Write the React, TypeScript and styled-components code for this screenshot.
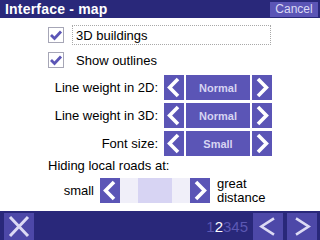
import styled, { createGlobalStyle } from 'styled-components';

const GlobalStyle = createGlobalStyle`
  html, body {
    margin: 0;
    padding: 0;
    background: #ffffff;
  }
  body {
    font-family: "Liberation Sans", Arial, sans-serif;
  }
`;

const Screen = styled.div`
  width: 320px;
  height: 240px;
  display: flex;
  flex-direction: column;
  overflow: hidden;
  background: #ffffff;
`;

const TitleBar = styled.div`
  height: 18px;
  background: #29287a;
  display: flex;
  align-items: center;
  justify-content: space-between;
  padding: 0 2px 0 5px;
`;

const Title = styled.div`
  color: #ffffff;
  font-size: 14px;
  font-weight: bold;
  letter-spacing: 0.2px;
`;

const CancelButton = styled.div`
  width: 48px;
  height: 15px;
  background: #5b55b6;
  color: #dcdaf4;
  font-size: 12px;
  display: flex;
  align-items: center;
  justify-content: center;
`;

const Content = styled.div`
  flex: 1;
  display: flex;
  flex-direction: column;
  padding-top: 7px;
`;

const CheckRow = styled.div`
  display: flex;
  align-items: center;
  height: 20px;
  padding-left: 48px;
  margin-bottom: 5px;
`;

const Box = styled.div`
  width: 14px;
  height: 14px;
  border: 1px solid #a6a6b6;
  background: #ffffff;
  display: flex;
  align-items: center;
  justify-content: center;
  margin-right: 8px;
`;

const CheckLabel = styled.div<{ $focused?: boolean }>`
  height: 18px;
  width: ${(p) => (p.$focused ? '194px' : 'auto')};
  border: 1px dotted ${(p) => (p.$focused ? '#a8a8a8' : 'transparent')};
  padding-left: 3px;
  display: flex;
  align-items: center;
  font-size: 13px;
  color: #000000;
`;

const SelectorRow = styled.div`
  display: flex;
  align-items: center;
  height: 25px;
  margin-bottom: 3px;
`;

const RowLabel = styled.div`
  width: 158px;
  text-align: right;
  font-size: 13px;
  color: #000000;
  margin-right: 6px;
`;

const ArrowButton = styled.div`
  width: 20px;
  height: 25px;
  background: #5b55b6;
  display: flex;
  align-items: center;
  justify-content: center;
`;

const ValueBox = styled.div`
  width: 64px;
  height: 25px;
  margin: 0 2px;
  background: #5b55b6;
  color: #d6d4f2;
  font-size: 11px;
  font-weight: bold;
  display: flex;
  align-items: center;
  justify-content: center;
`;

const PlainText = styled.div`
  font-size: 13px;
  color: #000000;
  padding-left: 48px;
  height: 15px;
  line-height: 15px;
  margin-bottom: 4px;
  margin-top: -1px;
`;

const SliderRow = styled.div`
  display: flex;
  align-items: center;
  height: 27px;
`;

const SideLabel = styled.div`
  width: 94px;
  text-align: right;
  font-size: 13px;
  color: #000000;
  margin-right: 6px;
`;

const Track = styled.div`
  display: flex;
  height: 25px;
`;

const Segment = styled.div<{ $w: number; $active?: boolean }>`
  width: ${(p) => p.$w}px;
  background: ${(p) => (p.$active ? '#d7d4f3' : '#f0eff9')};
`;

const FarLabel = styled.div`
  font-size: 13px;
  line-height: 14px;
  color: #000000;
  margin-left: 7px;
`;

const Footer = styled.div`
  height: 29px;
  background: #29287a;
  display: flex;
  align-items: flex-end;
  padding: 0 3px 0 4px;
`;

const FooterButton = styled.div`
  width: 30px;
  height: 27px;
  background: #4d48a8;
  display: flex;
  align-items: center;
  justify-content: center;
`;

const Spacer = styled.div`
  flex: 1;
`;

const Pages = styled.div`
  font-size: 15px;
  height: 27px;
  display: flex;
  align-items: center;
  margin-right: 5px;
  color: #5c58b4;
`;

const Page = styled.span<{ $current?: boolean }>`
  color: ${(p) => (p.$current ? '#ffffff' : '#5c58b4')};
`;

const FooterNav = styled.div`
  display: flex;
  gap: 4px;
`;

type ChevronProps = { dir: 'l' | 'r'; w?: number; h?: number; stroke?: number; color?: string; spread?: number };

const Chevron = ({ dir, w = 20, h = 25, stroke = 3.6, color = '#ffffff', spread = 0.34 }: ChevronProps) => {
  const top = h * (0.5 - spread);
  const bot = h * (0.5 + spread);
  const pts =
    dir === 'l'
      ? `${w * 0.7},${top} ${w * 0.28},${h * 0.5} ${w * 0.7},${bot}`
      : `${w * 0.3},${top} ${w * 0.72},${h * 0.5} ${w * 0.3},${bot}`;
  return (
    <svg width={w} height={h} viewBox={`0 0 ${w} ${h}`}>
      <polyline points={pts} fill="none" stroke={color} strokeWidth={stroke} strokeLinejoin="miter" />
    </svg>
  );
};

const Check = () => (
  <svg width="14" height="14" viewBox="0 0 14 14">
    <polyline points="2,7 5.5,10.5 12,3.5" fill="none" stroke="#5b55b6" strokeWidth="2.8" />
  </svg>
);

const CloseIcon = () => (
  <svg width="30" height="27" viewBox="0 0 30 27">
    <path d="M6 4 L24 23 M24 4 L6 23" stroke="#dcdaf4" strokeWidth="3" />
  </svg>
);

const selectors = [
  { label: 'Line weight in 2D:', value: 'Normal' },
  { label: 'Line weight in 3D:', value: 'Normal' },
  { label: 'Font size:', value: 'Small' },
];

export default function App() {
  return (
    <Screen>
      <GlobalStyle />
      <TitleBar>
        <Title>Interface - map</Title>
        <CancelButton>Cancel</CancelButton>
      </TitleBar>
      <Content>
        <CheckRow>
          <Box>
            <Check />
          </Box>
          <CheckLabel $focused>3D buildings</CheckLabel>
        </CheckRow>
        <CheckRow>
          <Box>
            <Check />
          </Box>
          <CheckLabel>Show outlines</CheckLabel>
        </CheckRow>
        {selectors.map((s) => (
          <SelectorRow key={s.label}>
            <RowLabel>{s.label}</RowLabel>
            <ArrowButton>
              <Chevron dir="l" />
            </ArrowButton>
            <ValueBox>{s.value}</ValueBox>
            <ArrowButton>
              <Chevron dir="r" />
            </ArrowButton>
          </SelectorRow>
        ))}
        <PlainText>Hiding local roads at:</PlainText>
        <SliderRow>
          <SideLabel>small</SideLabel>
          <ArrowButton>
            <Chevron dir="l" />
          </ArrowButton>
          <Track>
            <Segment $w={18} />
            <Segment $w={34} $active />
            <Segment $w={18} />
          </Track>
          <ArrowButton>
            <Chevron dir="r" />
          </ArrowButton>
          <FarLabel>
            great
            <br />
            distance
          </FarLabel>
        </SliderRow>
      </Content>
      <Footer>
        <FooterButton>
          <CloseIcon />
        </FooterButton>
        <Spacer />
        <Pages>
          <Page>1</Page>
          <Page $current>2</Page>
          <Page>345</Page>
        </Pages>
        <FooterNav>
          <FooterButton>
            <Chevron dir="l" w={30} h={27} stroke={2.6} color="#dcdaf4" spread={0.3} />
          </FooterButton>
          <FooterButton>
            <Chevron dir="r" w={30} h={27} stroke={2.6} color="#dcdaf4" spread={0.3} />
          </FooterButton>
        </FooterNav>
      </Footer>
    </Screen>
  );
}
